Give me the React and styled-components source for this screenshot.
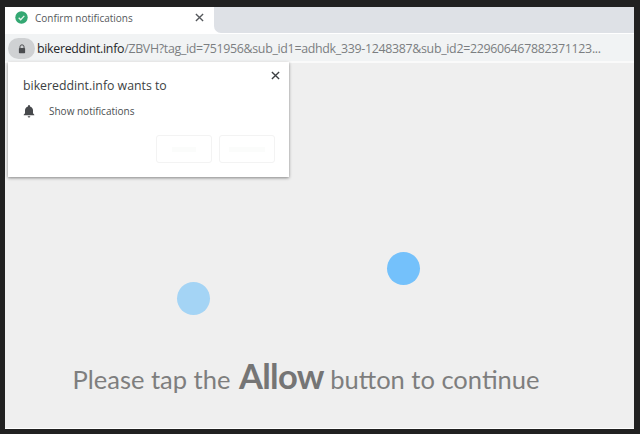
import React from 'react';
import styled, { createGlobalStyle } from 'styled-components';

const Global = createGlobalStyle`
  html, body {
    margin: 0;
    padding: 0;
    background: #212121;
  }
`;

const Frame = styled.div`
  box-sizing: border-box;
  width: 640px;
  height: 434px;
  padding: 7px 6px 5px 5px;
  background: #212121;
  font-family: "Open Sans", "Noto Sans", sans-serif;
`;

const Browser = styled.div`
  position: relative;
  height: 100%;
  display: flex;
  flex-direction: column;
  background: #fff;
  padding-bottom: 1px;
  box-sizing: border-box;
`;

const TabStrip = styled.div`
  height: 26px;
  display: flex;
  background: #fff;
`;

const Tab = styled.div`
  width: 209px;
  display: flex;
  align-items: center;
  padding: 0 10px 5px 10px;
  box-sizing: border-box;
  gap: 7px;
  font-size: 10px;
  color: #55585c;
`;

const TabTitle = styled.span`
  flex: 1;
  white-space: nowrap;
`;

const TabFill = styled.div`
  flex: 1;
  background: #dee1e6;
  border-bottom-left-radius: 7px;
`;

const AddressBar = styled.div`
  height: 29px;
  box-sizing: border-box;
  margin-top: 1px;
  padding: 4px 0 2px 3px;
  display: flex;
  align-items: center;
  background: #f1f3f4;
  border-bottom: 2px solid #fafafa;
`;

const LockPill = styled.div`
  width: 27px;
  height: 21px;
  flex: none;
  display: flex;
  align-items: center;
  justify-content: center;
  border-radius: 11px;
  background: #cfd1d3;
`;

const Url = styled.div`
  margin-left: 2px;
  font-size: 12.4px;
  letter-spacing: -0.025em;
  color: #7b7e81;
  white-space: nowrap;
`;

const Host = styled.span`
  color: #26282a;
`;

const Page = styled.div`
  position: relative;
  flex: 1;
  display: flex;
  align-items: flex-end;
  justify-content: center;
  background: #efefef;
`;

const Message = styled.div`
  margin: 0 0 30px -27px;
  font-family: "Lato", "Open Sans", sans-serif;
  font-size: 25.5px;
  line-height: 38px;
  color: #7e7e7e;
  white-space: nowrap;
`;

const Allow = styled.b`
  margin-left: 2px;
  font-size: 34.5px;
  font-weight: 700;
  color: #757575;
  letter-spacing: -0.02em;
`;

const Dot = styled.div`
  position: absolute;
  left: ${(p) => p.$x}px;
  top: ${(p) => p.$y}px;
  width: 33px;
  height: 33px;
  border-radius: 50%;
  background: ${(p) => p.$color};
`;

const Popup = styled.div`
  position: absolute;
  left: 3px;
  top: -1px;
  width: 281px;
  height: 115px;
  box-sizing: border-box;
  padding: 15px 14px 14px 15px;
  display: flex;
  flex-direction: column;
  background: #fff;
  box-shadow: 0 1px 3px rgba(0, 0, 0, 0.45);
`;

const CloseButton = styled.div`
  position: absolute;
  right: 9px;
  top: 9px;
  display: flex;
`;

const PopupTitle = styled.div`
  font-size: 12.3px;
  line-height: 18px;
  color: #3c3f42;
`;

const PermissionRow = styled.div`
  margin-top: 9px;
  display: flex;
  align-items: center;
  gap: 14px;
  font-size: 10px;
  line-height: 14px;
  color: #4c4f52;
`;

const Actions = styled.div`
  margin-top: auto;
  display: flex;
  justify-content: flex-end;
  gap: 7px;
`;

const GhostButton = styled.div`
  width: 56px;
  height: 28px;
  display: flex;
  align-items: center;
  justify-content: center;
  box-sizing: border-box;
  border: 1px solid #f3f3f3;
  border-radius: 3px;
`;

const GhostLabel = styled.div`
  width: ${(p) => p.$w}px;
  height: 5px;
  background: #fbfcfb;
`;

const CheckBadge = () => (
  <svg width="13" height="13" viewBox="0 0 13 13">
    <circle cx="6.5" cy="6.5" r="6.2" fill="#34a873" />
    <path d="M3.7 6.7l2 2 3.6-3.8" fill="none" stroke="#e8f6ef" strokeWidth="1.3" />
  </svg>
);

const Close = ({ size, color }) => (
  <svg width={size} height={size} viewBox="0 0 10 10">
    <path d="M1 1l8 8M9 1l-8 8" fill="none" stroke={color} strokeWidth="1.5" />
  </svg>
);

const Lock = () => (
  <svg width="8" height="10" viewBox="0 0 9 11">
    <path d="M2.2 4.5V3.1a2.3 2.3 0 0 1 4.6 0v1.4" fill="none" stroke="#4a4c4f" strokeWidth="1.1" />
    <rect x="1" y="4.3" width="7" height="6" rx="0.8" fill="#4a4c4f" />
  </svg>
);

const Bell = () => (
  <svg width="12" height="14" viewBox="0 0 12 14">
    <path d="M6 1a1 1 0 0 1 1 1v.4c1.8.4 3 2 3 3.9v3l1.3 1.4v.6H.7v-.6L2 9.3v-3c0-1.900 1.200-3.500 3-3.900V2a1 1 0 0 1 1-1z" fill="#47494c" />
    <path d="M4.700 12.300h2.600a1.300 1.300 0 0 1-2.600 0z" fill="#47494c" />
  </svg>
);

export default function App() {
  return (
    <>
      <Global />
      <Frame>
        <Browser>
          <TabStrip>
            <Tab>
              <CheckBadge />
              <TabTitle>Confirm notifications</TabTitle>
              <Close size={9} color="#55585c" />
            </Tab>
            <TabFill />
          </TabStrip>
          <AddressBar>
            <LockPill><Lock /></LockPill>
            <Url>
              <Host>bikereddint.info</Host>/ZBVH?tag_id=751956&amp;sub_id1=adhdk_339-1248387&amp;sub_id2=229606467882371123...
            </Url>
          </AddressBar>
          <Page>
            <Dot $x={172} $y={219} $color="#a4d4f5" />
            <Dot $x={382} $y={189} $color="#74c1fb" />
            <Message>
              Please tap the <Allow>Allow</Allow> button to continue
            </Message>
            <Popup>
              <CloseButton><Close size={9} color="#3c3f42" /></CloseButton>
              <PopupTitle>bikereddint.info wants to</PopupTitle>
              <PermissionRow>
                <Bell />
                Show notifications
              </PermissionRow>
              <Actions>
                <GhostButton><GhostLabel $w={24} /></GhostButton>
                <GhostButton><GhostLabel $w={36} /></GhostButton>
              </Actions>
            </Popup>
          </Page>
        </Browser>
      </Frame>
    </>
  );
}
